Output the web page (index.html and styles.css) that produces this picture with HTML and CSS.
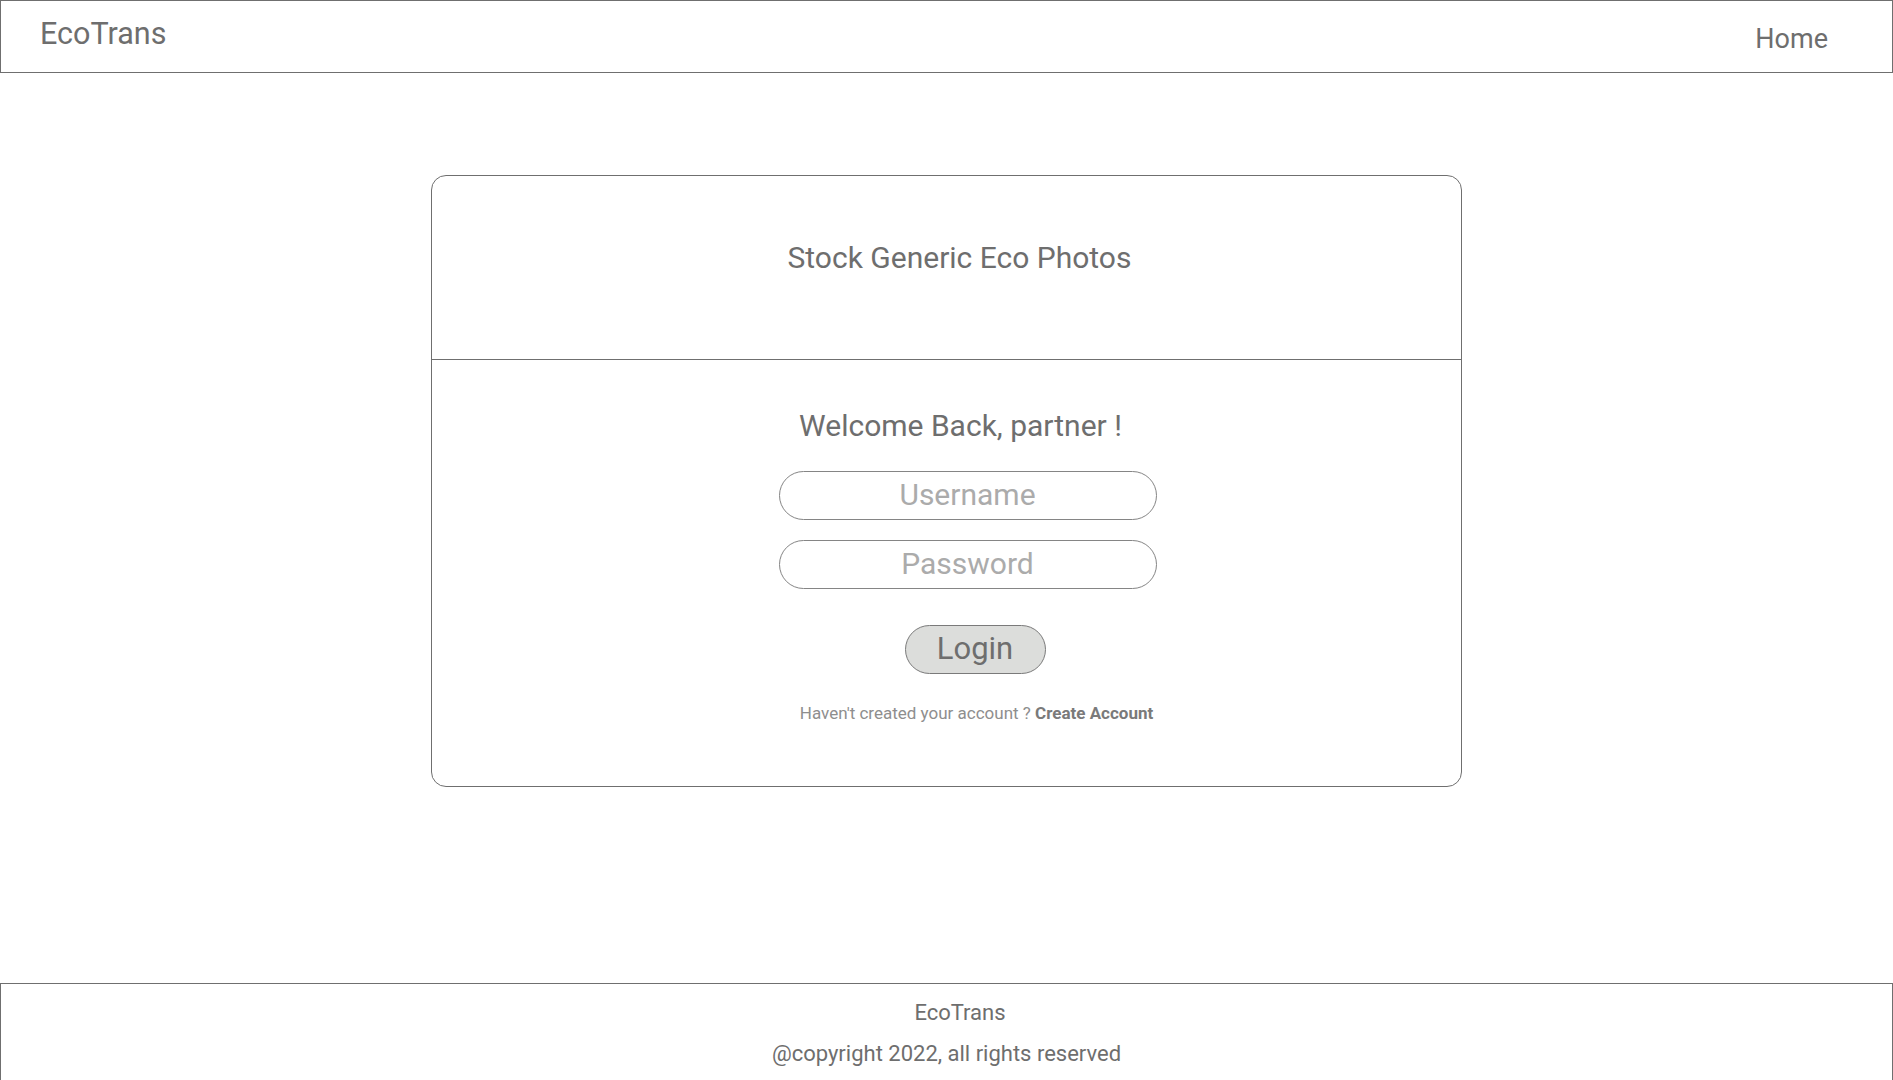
FILE: index.html
```html
<!DOCTYPE html>
<html lang="en">
<head>
<meta charset="utf-8">
<title>EcoTrans - Login</title>
<link rel="stylesheet" href="styles.css">
</head>
<body>
<header class="topbar">
  <div class="logo">EcoTrans</div>
  <nav class="nav"><a class="nav-link" href="#">Home</a></nav>
</header>
<main class="main">
  <section class="card">
    <div class="card-photo">
      <h2 class="photo-title">Stock Generic Eco Photos</h2>
    </div>
    <div class="card-form">
      <h1 class="welcome">Welcome Back, partner !</h1>
      <input class="field field-user" type="text" placeholder="Username">
      <input class="field field-pass" type="password" placeholder="Password">
      <button class="login-btn" type="button">Login</button>
      <p class="signup">Haven't created your account ? <a class="signup-link" href="#">Create Account</a></p>
    </div>
  </section>
</main>
<footer class="footer">
  <div class="footer-brand">EcoTrans</div>
  <div class="footer-copy">@copyright 2022, all rights reserved</div>
</footer>
</body>
</html>
```

FILE: styles.css
```css
* { box-sizing: border-box; }

html, body {
  margin: 0;
  padding: 0;
  background: #ffffff;
}

body {
  font-family: Roboto, "Liberation Sans", Arial, sans-serif;
  color: #6e6e6e;
  line-height: normal;
}

.topbar {
  height: 73px;
  border: 1px solid #6f6f6f;
  display: flex;
  justify-content: space-between;
  align-items: flex-start;
}

.logo {
  font-size: 30.5px;
  margin-top: 15px;
  margin-left: 39px;
}

.nav-link {
  display: block;
  font-size: 27px;
  color: #6e6e6e;
  text-decoration: none;
  margin-top: 22px;
  margin-right: 64px;
}

.main {
  padding-top: 102px;
}

.card {
  width: 1031px;
  margin: 0 auto;
  border: 1px solid #6f6f6f;
  border-radius: 15px;
}

.card-photo {
  height: 184px;
  border-bottom: 1px solid #6f6f6f;
  padding-top: 64px;
  padding-left: 26px;
  text-align: center;
}

.photo-title {
  margin: 0;
  font-size: 30px;
  font-weight: 400;
}

.card-form {
  display: flex;
  flex-direction: column;
  align-items: center;
  padding-top: 48px;
  padding-bottom: 63px;
}

.welcome {
  margin: 0 0 0 28px;
  font-size: 30px;
  font-weight: 400;
}

.field {
  width: 378px;
  height: 49px;
  margin-left: 42px;
  border: 1px solid #858585;
  border-radius: 25px;
  background: #ffffff;
  font-family: inherit;
  font-size: 30px;
  color: #6e6e6e;
  text-align: center;
  padding: 0 0 3px 0;
  outline: none;
}

.field::placeholder {
  color: #ababab;
}

.field-user {
  margin-top: 28px;
}

.field-pass {
  margin-top: 20px;
}

.login-btn {
  margin-top: 36px;
  margin-left: 57px;
  width: 141px;
  height: 49px;
  border: 1px solid #7a7a7a;
  border-radius: 25px;
  background: #dcdddb;
  font-family: inherit;
  font-size: 31px;
  color: #6e6e6e;
  padding: 0 0 3px 0;
  cursor: pointer;
}

.signup {
  margin: 29px 0 0 60px;
  font-size: 17px;
  color: #8e8e8e;
}

.signup-link {
  color: #7a7a7a;
  font-weight: 700;
  text-decoration: none;
}

.footer {
  margin-top: 196px;
  height: 112px;
  border: 1px solid #6f6f6f;
  display: flex;
  flex-direction: column;
  align-items: center;
  padding-top: 16px;
}

.footer-brand {
  font-size: 22px;
  margin-left: 27px;
}

.footer-copy {
  font-size: 22px;
  margin-top: 16px;
}
```
